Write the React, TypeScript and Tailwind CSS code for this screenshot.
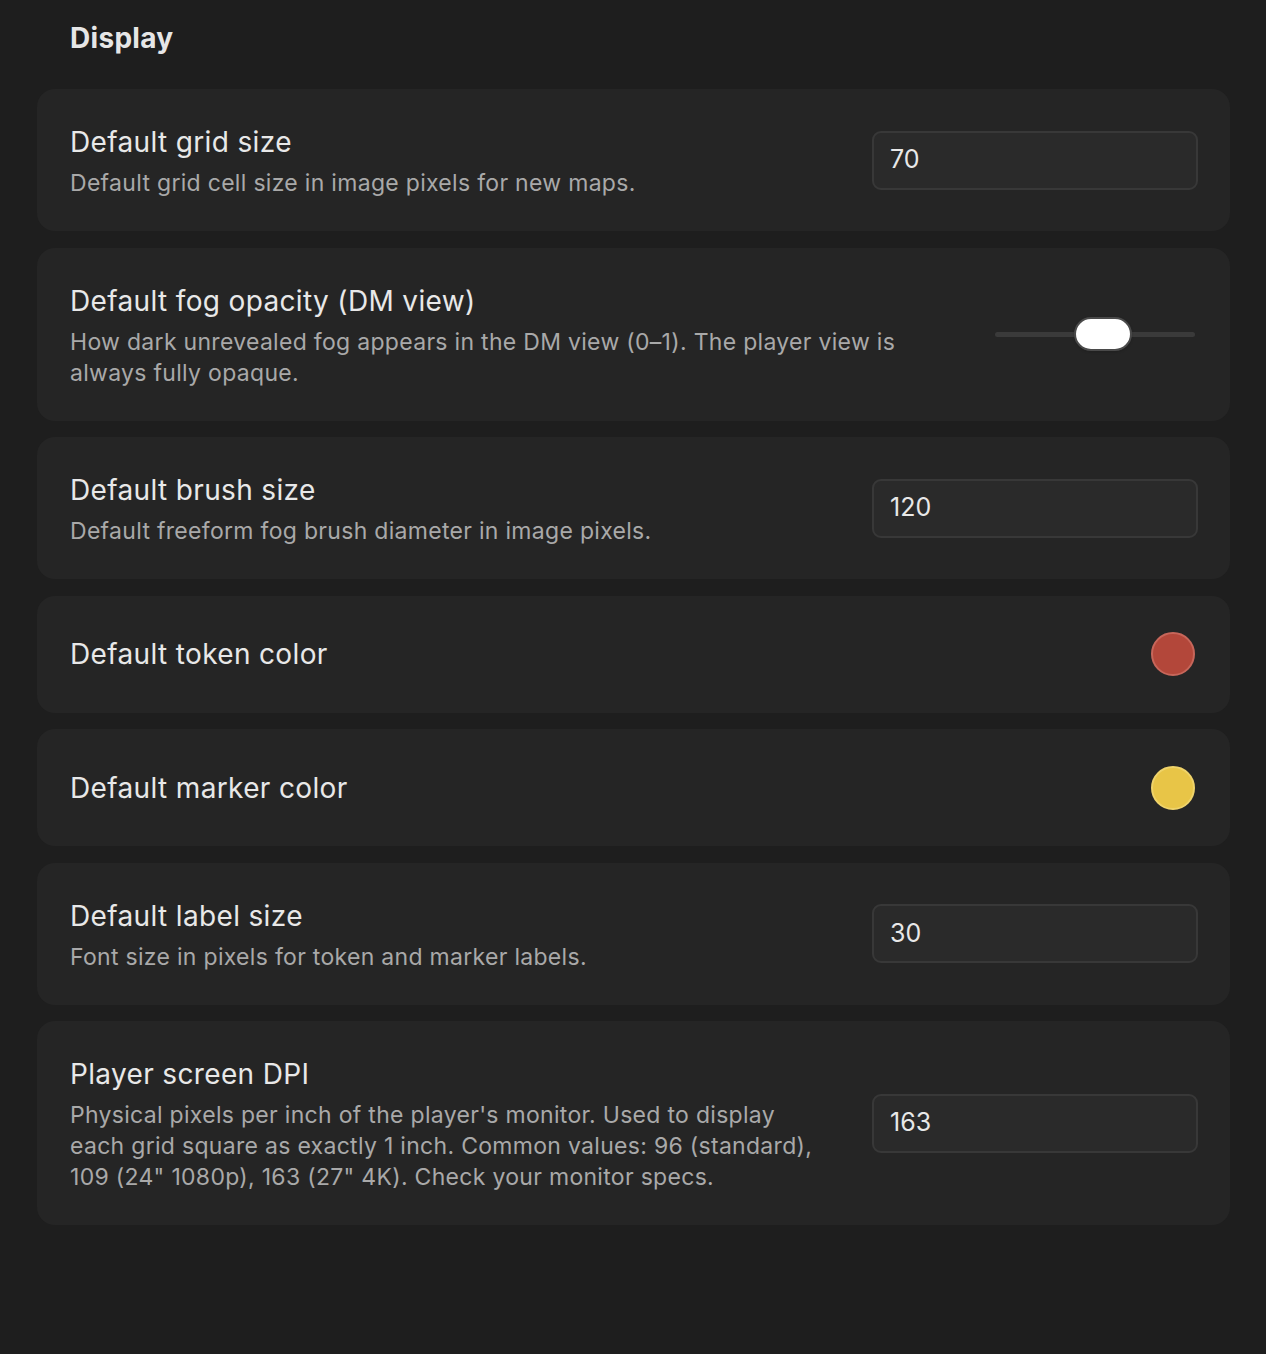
import React from 'react';

type Row = {
  title: string;
  desc?: string;
  control: React.ReactNode;
};

function NumberInput({ value }: { value: string }) {
  return (
    <div className="w-[326px] h-[59px] shrink-0 rounded-[9px] border-2 border-[#383838] bg-[#2a2a2a] px-4 flex items-center text-[25px] text-[#e8e8e8]">
      {value}
    </div>
  );
}

function Slider() {
  return (
    <div className="relative w-[200px] h-[34px] mr-[3px] shrink-0 flex items-center">
      <div className="w-full h-[5px] rounded-full bg-[#3a3a3a]" />
      <div className="absolute left-[79px] top-0 w-[58px] h-[34px] rounded-full bg-white border-2 border-[#4a4a4a] shadow" />
    </div>
  );
}

function Swatch({ color, ring }: { color: string; ring: string }) {
  return (
    <div className="h-[53px] mr-[3px] shrink-0 flex items-center">
      <div
        className="w-[44px] h-[44px] rounded-full border-2"
        style={{ backgroundColor: color, borderColor: ring }}
      />
    </div>
  );
}

export default function App() {
  const rows: Row[] = [
    {
      title: 'Default grid size',
      desc: 'Default grid cell size in image pixels for new maps.',
      control: <NumberInput value="70" />,
    },
    {
      title: 'Default fog opacity (DM view)',
      desc: 'How dark unrevealed fog appears in the DM view (0–1). The player view is always fully opaque.',
      control: <Slider />,
    },
    {
      title: 'Default brush size',
      desc: 'Default freeform fog brush diameter in image pixels.',
      control: <NumberInput value="120" />,
    },
    {
      title: 'Default token color',
      control: <Swatch color="#b3473a" ring="#c7665a" />,
    },
    {
      title: 'Default marker color',
      control: <Swatch color="#e8c547" ring="#efd36a" />,
    },
    {
      title: 'Default label size',
      desc: 'Font size in pixels for token and marker labels.',
      control: <NumberInput value="30" />,
    },
    {
      title: 'Player screen DPI',
      desc: "Physical pixels per inch of the player's monitor. Used to display each grid square as exactly 1 inch. Common values: 96 (standard), 109 (24\" 1080p), 163 (27\" 4K). Check your monitor specs.",
      control: <NumberInput value="163" />,
    },
  ];

  return (
    <div className="min-h-[1354px] bg-[#1e1e1e] pl-[37px] pr-[36px] pt-[19px] font-['Inter',sans-serif]">
      <h2 className="pl-[33px] text-[28px] leading-[38px] font-bold tracking-[0.3px] text-[#e6e6e6] mb-[32px]">Display</h2>
      <div className="flex flex-col gap-[16.5px]">
        {rows.map((r) => (
          <div key={r.title} className="rounded-[18px] bg-[#252525] pl-[33px] pr-[32px] py-8 flex items-center gap-12">
            <div className="flex-1 min-w-0">
              <div className={`text-[28px] leading-[42px] tracking-[0.35px] text-[#e8e8e8] ${r.desc ? 'mb-[5px]' : ''}`}>{r.title}</div>
              {r.desc && <div className="text-[23px] leading-[31px] tracking-[0.3px] text-[#a9a9a9]">{r.desc}</div>}
            </div>
            {r.control}
          </div>
        ))}
      </div>
    </div>
  );
}
